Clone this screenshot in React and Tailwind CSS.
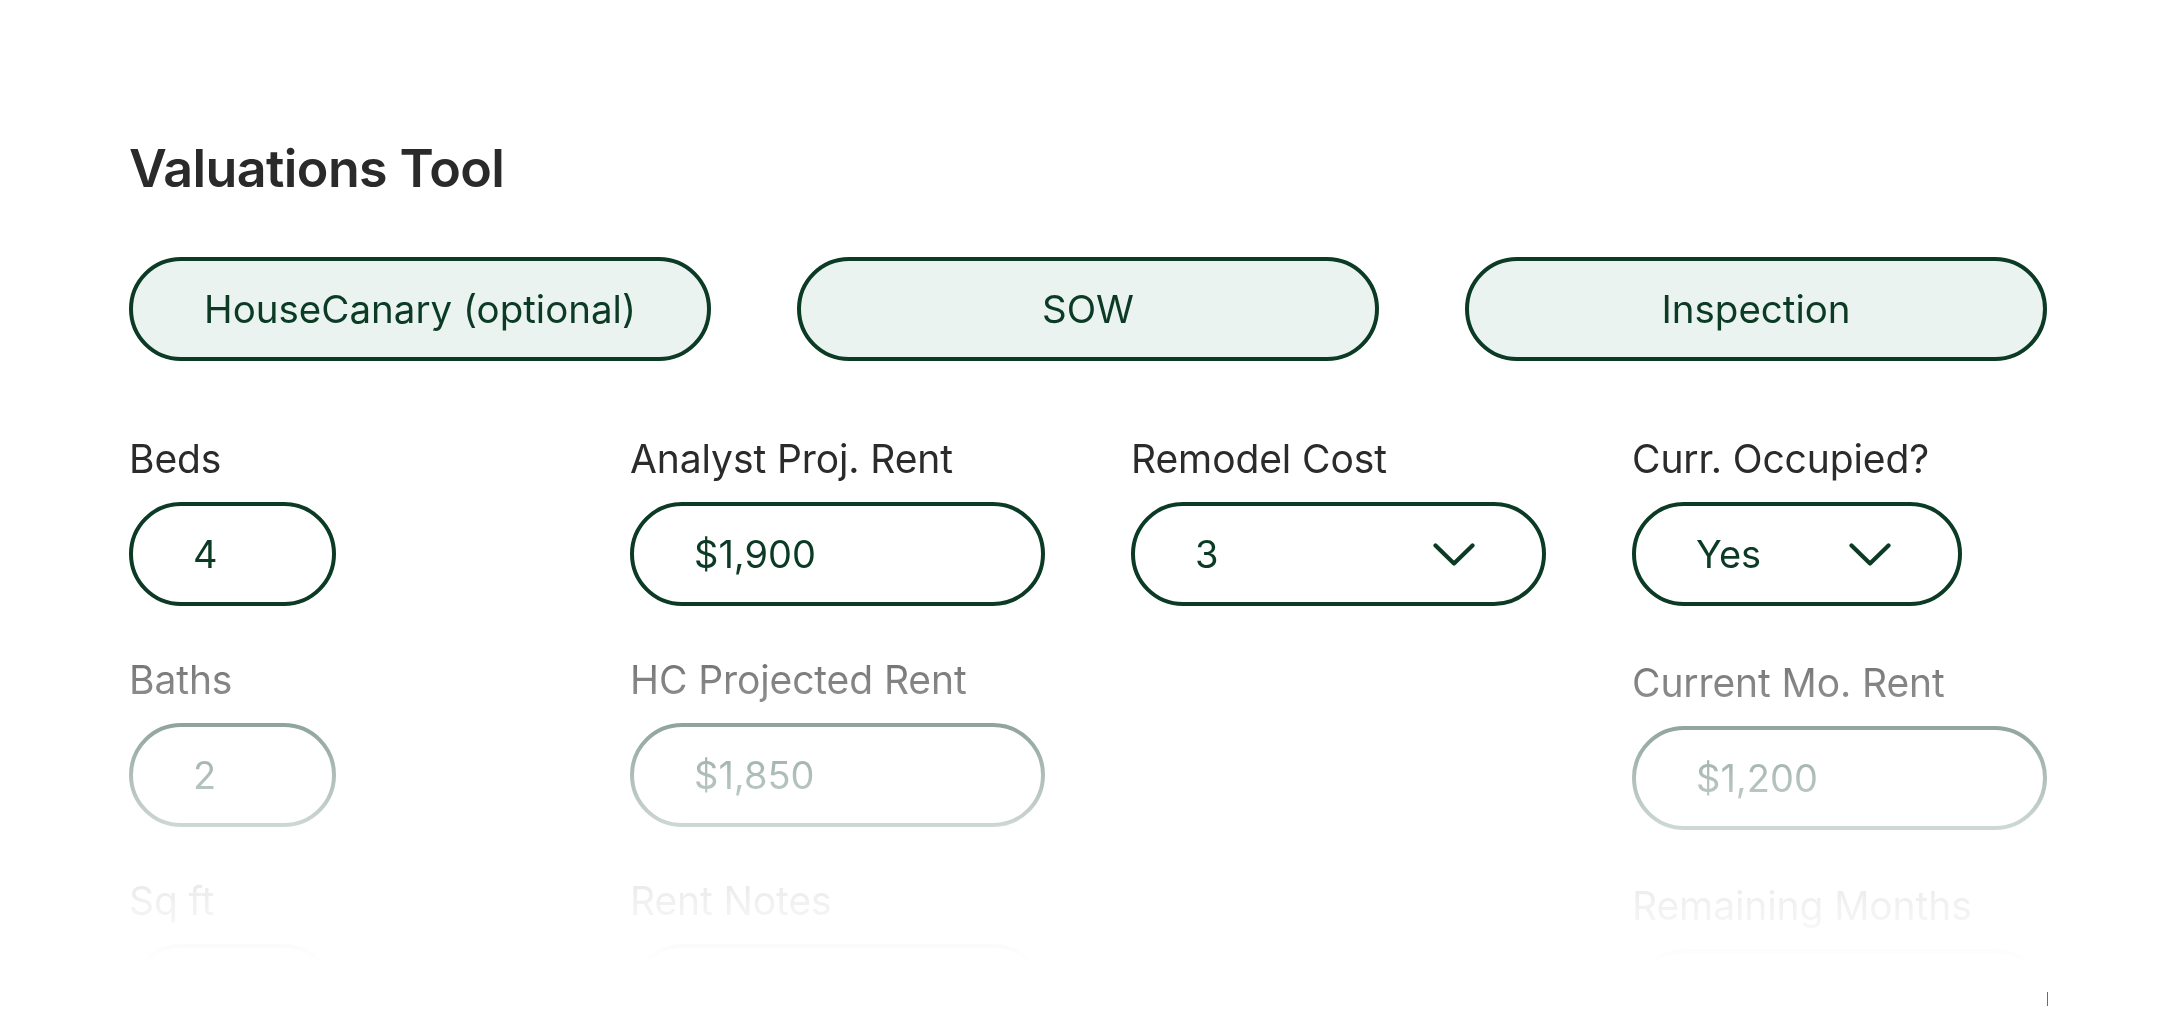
import React from "react";

const GREEN = "text-[#0b3a25]";

function Chevron() {
  return (
    <svg width="42" height="23" viewBox="0 0 42 23" fill="none" className="shrink-0">
      <path d="M2.5 2.5 L21 20.5 L39.5 2.5" stroke="#0b3a25" strokeWidth="4.2" strokeLinecap="round" strokeLinejoin="round" />
    </svg>
  );
}

function Field({ label, value, width = "w-full", select = false }) {
  return (
    <div className="flex flex-col">
      <div className="h-[46px] text-[39px] leading-[46px] text-[#2b2b2b] whitespace-nowrap tracking-[-0.1px]">{label}</div>
      <div
        className={`mt-[20px] h-[104px] ${width} rounded-full border-[4px] border-[#0b3a25] bg-white flex items-center justify-between pl-[60px] ${select ? "pr-[67px]" : "pr-[40px]"}`}
      >
        <span className={`text-[38px] leading-none ${GREEN}`}>{value}</span>
        {select ? <Chevron /> : null}
      </div>
    </div>
  );
}

function Pill({ children }) {
  return (
    <button className="h-[104px] w-full rounded-full border-[4px] border-[#0b3a25] bg-[#ebf3f0] flex items-center justify-center">
      <span className={`text-[38.5px] leading-none ${GREEN}`}>{children}</span>
    </button>
  );
}

const MASK =
  "[mask-image:linear-gradient(to_bottom,#000_612px,rgba(0,0,0,0.62)_670px,rgba(0,0,0,0.46)_725px,rgba(0,0,0,0.2)_827px,rgba(0,0,0,0.07)_900px,rgba(0,0,0,0.02)_945px,rgba(0,0,0,0)_962px)] [-webkit-mask-image:linear-gradient(to_bottom,#000_612px,rgba(0,0,0,0.62)_670px,rgba(0,0,0,0.46)_725px,rgba(0,0,0,0.2)_827px,rgba(0,0,0,0.07)_900px,rgba(0,0,0,0.02)_945px,rgba(0,0,0,0)_962px)]";

export default function App() {
  return (
    <div className="relative h-[1024px] w-[2176px] overflow-hidden bg-white font-['Inter','Noto_Sans',sans-serif]">
      <div className={`h-[1024px] ${MASK}`}>
        <div className="px-[129px] pt-[137px]">
          <h1 className="h-[64px] text-[52px] leading-[64px] font-semibold text-[#2a2a2a] tracking-[-0.6px]">Valuations Tool</h1>

          <div className="mt-[56px] grid grid-cols-3 gap-x-[86px]">
            <Pill>HouseCanary (optional)</Pill>
            <Pill>SOW</Pill>
            <Pill>Inspection</Pill>
          </div>

          <div className="mt-[75px] grid grid-cols-4 gap-x-[86px] items-start">
            <div className="flex flex-col gap-[51px]">
              <Field label="Beds" value="4" width="w-[207px]" />
              <Field label="Baths" value="2" width="w-[207px]" />
              <Field label="Sq ft" value="" width="w-[207px]" />
            </div>
            <div className="flex flex-col gap-[51px]">
              <Field label="Analyst Proj. Rent" value="$1,900" />
              <Field label="HC Projected Rent" value="$1,850" />
              <Field label="Rent Notes" value="" />
            </div>
            <div className="flex flex-col gap-[51px]">
              <Field label="Remodel Cost" value="3" select />
            </div>
            <div className="flex flex-col">
              <Field label="Curr. Occupied?" value="Yes" width="w-[330px]" select />
              <div className="mt-[54px]">
                <Field label="Current Mo. Rent" value="$1,200" />
              </div>
              <div className="mt-[53px]">
                <Field label="Remaining Months" value="" />
              </div>
            </div>
          </div>
        </div>
      </div>
      <div className="absolute left-[2047px] top-[992px] h-[14px] w-px bg-[#6b6b6b]" />
    </div>
  );
}
